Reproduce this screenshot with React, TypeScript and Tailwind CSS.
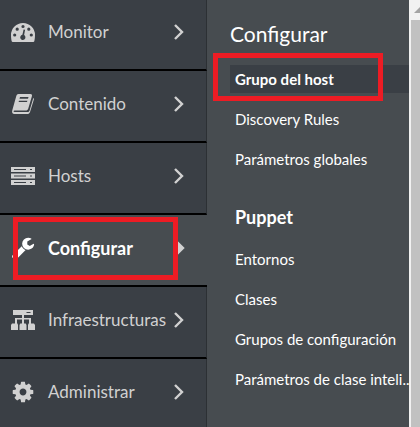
import type { ReactNode } from "react";

const glyphs: Record<string, ReactNode> = {
  monitor: (
    <svg viewBox="0 0 24 19" className="h-[19px] w-6" fill="currentColor">
      <path
        fillRule="evenodd"
        d="M12 0a12 12 0 0 1 12 12c0 2.400-.3 4.600-.7 6.300-.1.500-.5.700-1 .7H1.700c-.5 0-.9-.2-1-.7C.3 16.600 0 14.400 0 12A12 12 0 0 1 12 0ZM12 1.900a1.600 1.600 0 1 0 0 3.200 1.600 1.600 0 0 0 0-3.200ZM6.200 4.600a1.600 1.600 0 1 0 0 3.200 1.600 1.600 0 0 0 0-3.200ZM17.800 4.600a1.600 1.600 0 1 0 0 3.200 1.600 1.600 0 0 0 0-3.200ZM3.700 10.400a1.600 1.600 0 1 0 0 3.200 1.600 1.600 0 0 0 0-3.200ZM20.300 10.400a1.600 1.600 0 1 0 0 3.200 1.600 1.600 0 0 0 0-3.200ZM12.600 6.500l-1.200 5.300a2.600 2.600 0 1 0 1.700.3L14.100 6.800Z"
      />
    </svg>
  ),
  contenido: (
    <svg viewBox="0 0 24 22" className="h-[22px] w-6" fill="currentColor">
      <path
        fillRule="evenodd"
        d="M7.500 1h11.800c1.400 0 2 .9 1.600 2.200l-3.700 12.600c-.4 1.200-1.200 1.800-2.500 1.800H3.600c-1.300 0-1.500 1.500-.1 1.500h13c1 0 1.700-.5 2-1.400L22.300 5c.6.4.7 1 .5 1.800l-3.700 11.900c-.5 1.500-1.500 2.300-3 2.300H3.500C1.300 21 .7 19.200 1.300 17.200L5.300 3C5.700 1.700 6.300 1 7.500 1ZM9 4l-.5 1.700h8.500l.5-1.700ZM8 7.700l-.4 1.400h8.400l.4-1.400Z"
      />
    </svg>
  ),
  hosts: (
    <svg viewBox="0 0 24 18" className="h-[18px] w-6" fill="currentColor">
      <path
        fillRule="evenodd"
        d="M0 0h24v5H0ZM3 2v1h12V2ZM19 2v1h2V2ZM0 6.500h24v5H0ZM3 8.500v1h12v-1ZM19 8.500v1h2v-1ZM0 13h24v5H0ZM3 15v1h12v-1ZM19 15v1h2v-1Z"
      />
    </svg>
  ),
  configurar: (
    <svg viewBox="0 0 1792 1792" className="size-6" fill="currentColor">
      <path d="M448 1472q0-26-19-45t-45-19-45 19-19 45 19 45 45 19 45-19 19-45zm644-420l-682 682q-37 37-90 37-52 0-91-37l-106-108q-38-36-38-90 0-53 38-91l681-681q39 98 114.500 173.500t173.500 114.500zm634-435q0 39-23 106-47 134-164.500 217.500t-258.500 83.500q-185 0-316.500-131.500t-131.500-316.500 131.500-316.500 316.500-131.500q58 0 121.500 16.500t107.500 46.500q16 11 16 28t-16 28l-293 169v224l193 107q5-3 79-48.500t135.500-81 70.500-35.500q15 0 23.500 10t8.500 25z" />
    </svg>
  ),
  infraestructuras: (
    <svg viewBox="0 0 24 20" className="h-5 w-6" fill="currentColor">
      <path
        fillRule="evenodd"
        d="M2 0h20v5H2ZM15.500 2v1h4V2ZM11 5h2v3h7v5.500h-2V9.500h-5v4h-2v-4H6v4H4V8h7ZM1 13.500h5.500l.5 1.500v5H0v-5ZM9.300 13.500h5.400l.8 1.500v5h-7v-5ZM17.500 13.500H23l1 1.500v5h-7v-5Z"
      />
    </svg>
  ),
  administrar: (
    <svg viewBox="0 0 1792 1792" className="size-6" fill="currentColor">
      <path d="M1152 896q0-106-75-181t-181-75-181 75-75 181 75 181 181 75 181-75 75-181zm512-109v222q0 12-8 23t-20 13l-185 28q-19 54-39 91 35 50 107 138 10 12 10 25t-9 23q-27 37-99 108t-94 71q-12 0-26-9l-138-108q-44 23-91 38-16 136-29 186-7 28-36 28h-222q-14 0-24.500-8.500t-11.500-21.500l-28-184q-49-16-90-37l-141 107q-10 9-25 9-14 0-25-11-126-114-165-168-7-10-7-23 0-12 8-23 15-21 51-66.500t54-70.500q-27-50-41-99l-183-27q-13-2-21-12.500t-8-23.500v-222q0-12 8-23t19-13l186-28q14-46 39-92-40-57-107-138-10-12-10-24 0-10 9-23 26-36 98.500-107.500t94.500-71.500q13 0 26 10l138 107q44-23 91-38 16-136 29-186 7-28 36-28h222q14 0 24.500 8.500t11.500 21.500l28 184q49 16 90 37l142-107q9-9 24-9 13 0 25 10 129 119 165 170 7 8 7 22 0 12-8 23-15 21-51 66.500t-54 70.500q26 50 41 98l183 28q13 2 21 12.500t8 23.500z" />
    </svg>
  ),
};

const sections = [
  { id: "monitor", label: "Monitor" },
  { id: "contenido", label: "Contenido" },
  { id: "hosts", label: "Hosts" },
  { id: "configurar", label: "Configurar" },
  { id: "infraestructuras", label: "Infraestructuras" },
  { id: "administrar", label: "Administrar" },
];

const general = ["Grupo del host", "Discovery Rules", "Parámetros globales"];
const puppet = ["Entornos", "Clases", "Grupos de configuración", "Parámetros de clase inteli.."];

function Chevron({ solid }: { solid: boolean }) {
  return (
    <svg
      viewBox="0 0 10 16"
      className="h-4 w-[10px] shrink-0 text-[#d1d1d1]"
      fill={solid ? "currentColor" : "none"}
      stroke="currentColor"
      strokeWidth="2.4"
    >
      <path d="M1 1l7 7-7 7" />
    </svg>
  );
}

function SectionItem({ id, label, active }: { id: string; label: string; active: boolean }) {
  return (
    <li className="relative">
      <button
        type="button"
        className={
          "flex h-18 w-full items-center border-b-2 border-b-black pr-[22px] pb-1 pl-[11px] text-left " +
          (active
            ? "bg-[#474c50] text-lg font-bold text-white"
            : "border-r border-r-[#2c3034] bg-[#3a3f45] text-[17px] text-[#d1d1d1]")
        }
      >
        <span className="flex w-[37px] shrink-0">{glyphs[id]}</span>
        <span className="flex-1 whitespace-nowrap">{label}</span>
        <Chevron solid={active} />
      </button>
      {active && <span className="pointer-events-none absolute top-[2px] right-[29px] bottom-[7px] left-[13px] border-5 border-[#ed1c24]" />}
    </li>
  );
}

function SubItem({ label, active }: { label: string; active?: boolean }) {
  return (
    <li className="relative">
      <a
        href="#"
        className={
          "flex h-7 items-center pl-[5px] text-[15px] whitespace-nowrap text-white " +
          (active ? "bg-[#3a3f45] font-bold" : "")
        }
      >
        {label}
      </a>
      {active && <span className="pointer-events-none absolute -top-3 right-[26px] -bottom-2 -left-[17px] border-5 border-[#ed1c24]" />}
    </li>
  );
}

export default function App() {
  return (
    <div className="flex h-screen overflow-hidden bg-[#474c50] font-['Lato',sans-serif]">
      <nav aria-label="Principal" className="-mt-px w-[207px] shrink-0">
        <ul>
          {sections.map((s) => (
            <SectionItem key={s.id} id={s.id} label={s.label} active={s.id === "configurar"} />
          ))}
        </ul>
      </nav>
      <section className="min-w-0 flex-1 pt-5 pl-[23px] text-white">
        <h2 className="text-[21px] leading-7">Configurar</h2>
        <ul className="mt-[17px] flex flex-col gap-3">
          {general.map((label, i) => (
            <SubItem key={label} label={label} active={i === 0} />
          ))}
        </ul>
        <h3 className="mt-8 pl-[5px] text-lg leading-6 font-bold">Puppet</h3>
        <ul className="mt-4 flex flex-col gap-3">
          {puppet.map((label) => (
            <SubItem key={label} label={label} />
          ))}
        </ul>
      </section>
      <div aria-hidden="true" className="flex w-[11px] shrink-0 flex-col bg-[#f1f1f1] pl-[2px]">
        <svg viewBox="0 0 9 20" className="h-5 w-[9px]" fill="#a3a3a3">
          <path d="M3 13L9 7v6Z" />
        </svg>
        <div className="flex-1 bg-[#c1c1c1]" />
      </div>
    </div>
  );
}
